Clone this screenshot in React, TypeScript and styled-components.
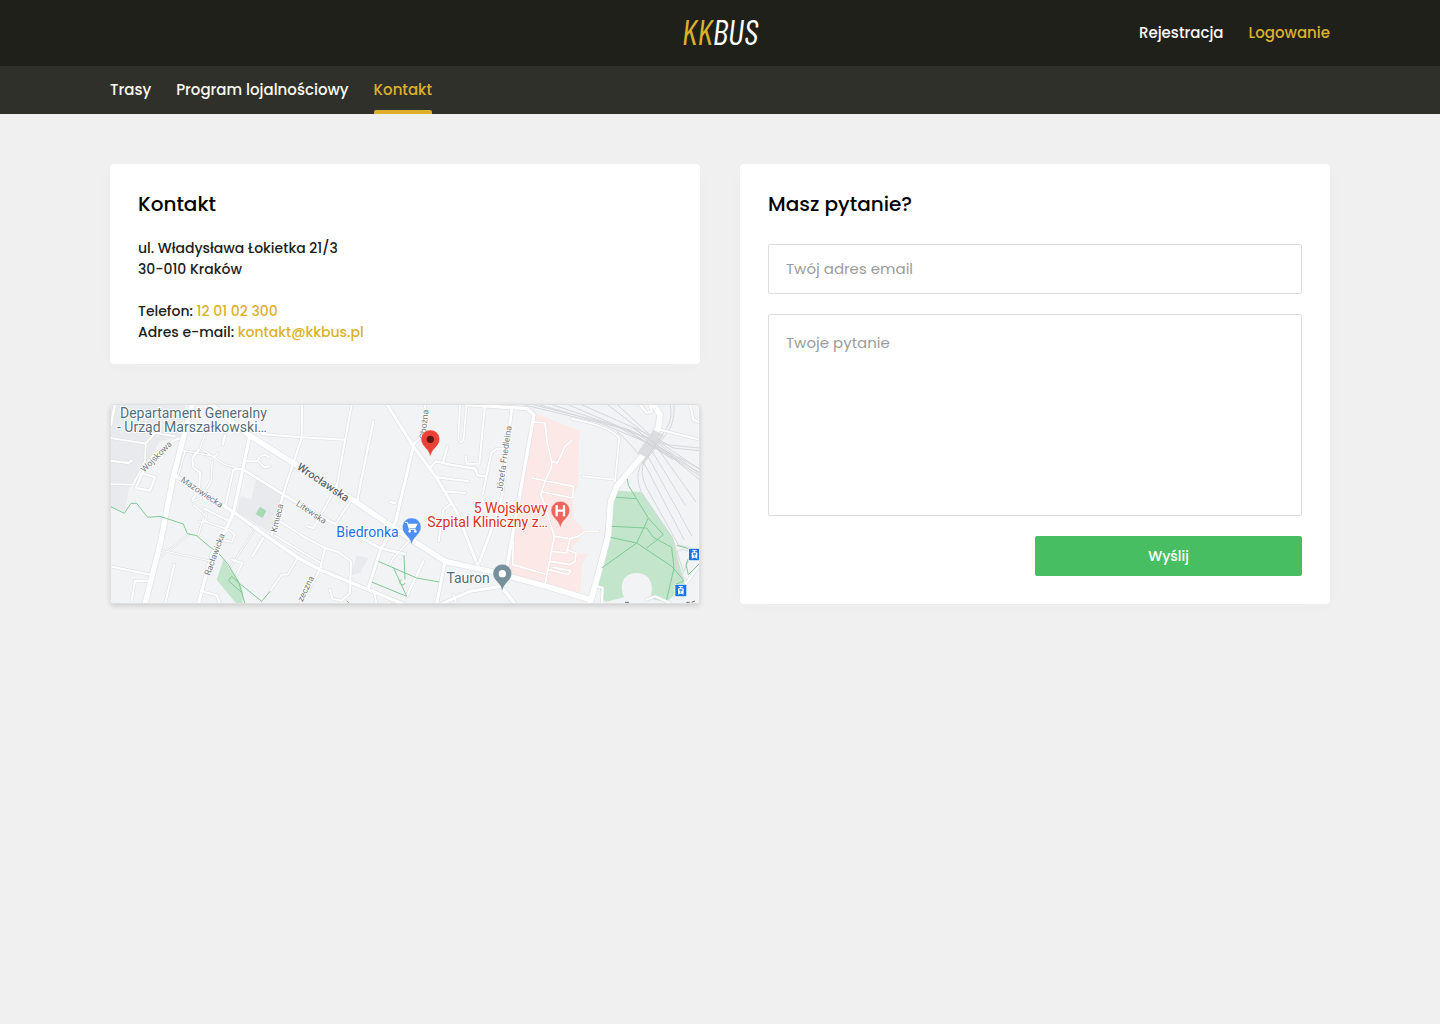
import React from "react";
import styled, { createGlobalStyle } from "styled-components";

const color = {
  ink: "#21211b",
  dark: "#20201b",
  darkSoft: "#30302b",
  gold: "#dbb12c",
  light: "#fafaf2",
  page: "#f0f0f0",
  green: "#48be63",
  line: "#dcdcdc",
};

const GlobalStyle = createGlobalStyle`
  *, *::before, *::after { box-sizing: border-box; }
  body {
    margin: 0;
    background: ${color.page};
    color: ${color.ink};
    font-family: Poppins, Inter, "Noto Sans", sans-serif;
    font-size: 14px;
    font-weight: 500;
    -webkit-font-smoothing: antialiased;
  }
`;

const Container = styled.div`
  width: 100%;
  max-width: 1220px;
  margin: 0 auto;
`;

const TopBar = styled.header`
  background: ${color.dark};
`;

const TopBarInner = styled(Container)`
  display: grid;
  grid-template-columns: 1fr auto 1fr;
  align-items: center;
  height: 66px;
`;

const Logo = styled.a`
  grid-column: 2;
  padding-bottom: 4px;
  color: #fff;
  font-family: "Barlow Condensed", "Roboto Condensed", sans-serif;
  font-size: 35px;
  font-style: italic;
  font-weight: 400;
  line-height: 40px;
  text-decoration: none;
`;

const LogoAccent = styled.span`
  color: ${color.gold};
`;

const AccountLinks = styled.nav`
  display: flex;
  justify-content: flex-end;
  gap: 25px;
`;

const BarLink = styled.a<{ $active?: boolean }>`
  color: ${(p) => (p.$active ? color.gold : color.light)};
  font-size: 15px;
  line-height: 24px;
  text-decoration: none;
`;

const MenuBar = styled.div`
  background: ${color.darkSoft};
`;

const Menu = styled(Container).attrs({ as: "nav" })`
  display: flex;
  gap: 25px;
  height: 48px;
`;

const MenuLink = styled(BarLink)`
  display: flex;
  flex-direction: column;
  justify-content: space-between;
  padding-top: 12px;

  &::after {
    content: "";
    height: 4px;
    border-radius: 2px 2px 0 0;
    background: ${(p) => (p.$active ? color.gold : "transparent")};
  }
`;

const Content = styled(Container).attrs({ as: "main" })`
  display: grid;
  grid-template-columns: 1fr 1fr;
  gap: 40px;
  padding: 50px 0;
`;

const Column = styled.div`
  display: flex;
  flex-direction: column;
  gap: 40px;
`;

const Card = styled.section`
  flex: 1;
  padding: 28px 28px 20px;
  background: #fff;
  border-radius: 4px;
  box-shadow: 0 3px 20px rgba(0, 0, 0, 0.02);
`;

const FormCard = styled(Card)`
  padding-bottom: 28px;
`;

const Title = styled.h2`
  margin: 0;
  color: #000;
  font-size: 20px;
  font-weight: 500;
  line-height: 24px;
`;

const Address = styled.address`
  margin-top: 22px;
  font-style: normal;
  line-height: 21px;
`;

const AddressBlock = styled.p`
  margin: 0 0 21px;

  &:last-child {
    margin-bottom: 0;
  }
`;

const ContactLink = styled.a`
  color: ${color.gold};
  text-decoration: none;
`;

const MapFrame = styled.figure`
  height: 200px;
  margin: 0;
  overflow: hidden;
  border: 1px solid #dfe0e2;
  border-radius: 4px;
  box-shadow: 0 2px 5px rgba(0, 0, 0, 0.15);
`;

const MapDrawing = styled.svg`
  display: block;
  width: 100%;
  height: 100%;
  font-family: Roboto, sans-serif;
`;

const Form = styled.form`
  display: flex;
  flex-direction: column;
  gap: 20px;
  margin-top: 28px;
`;

const Field = styled.input`
  display: block;
  width: 100%;
  height: 50px;
  padding: 0 17px 2px;
  border: 1px solid ${color.line};
  border-radius: 2px;
  background: #fff;
  color: ${color.ink};
  font: inherit;
  font-size: 15px;
  font-weight: 400;
  line-height: 24px;

  &::placeholder {
    color: #9b9b9b;
    opacity: 1;
  }
`;

const TextArea = styled(Field).attrs({ as: "textarea" })`
  height: 202px;
  padding: 16px 17px;
  resize: none;
`;

const SubmitButton = styled.button`
  align-self: flex-end;
  width: 50%;
  height: 40px;
  border: 0;
  border-radius: 2px;
  background: ${color.green};
  color: #fff;
  font: inherit;
  cursor: pointer;
`;

type Road = [width: number, d: string];

/* The map is drawn in two sheets; the eastern one is shifted to join the western one. */
const EAST = "translate(-15 0)";

const westRoads: Road[] = [
  [5, "M15 120L122 137L150 105L210 115 M122 137L120 190L85 260L15 258"],
  [6, "M15 188L70 195L80 188"],
  [7, "M110 228L93 270L135 278L150 238L118 228"],
  [7, "M222 122L205 128L140 178L110 228"],
  [7, "M360 112L353 140 M30 18L18 80"],
  [4, "M235 158L330 175L340 165 M220 230L240 160 M300 110L285 150L360 200L412 215"],
  [6, "M282 155L262 180L265 208L285 225L282 275L262 305"],
  [4, "M322 190L318 250L290 300L262 310 M295 360L280 410 M265 320L305 355L295 375L282 370"],
  [5, "M300 370L370 395L390 410L380 432L350 425"],
  [6, "M385 215L362 320 M298 332L370 368 M415 212L385 215"],
  [6, "M425 190L455 190L465 175L480 170L492 178 M460 190L478 208L492 205"],
  [3, "M165 478L250 410 M160 455L320 490 M445 400L375 510"],
  [6, "M15 505L135 530 M130 550L90 548L80 608 M208 500L180 618"],
  [6, "M290 580L335 592L345 618 M380 485L412 495L395 530"],
  [7, "M590 120L540 270L500 410 M475 420L442 475"],
  [6, "M470 108L590 118L720 125 M590 118L591 18"],
  [6, "M525 370L600 418L660 450L645 515L585 618 M660 450L700 462L738 490L735 585L710 608L682 602L675 575"],
  [5, "M508 412L648 496 M575 485L548 530L530 530L495 580"],
  [8, "M415 215L560 305L675 370L825 450L900 468"],
  [10, "M435 110L410 230L385 345L360 400L320 470L280 618"],
  [10, "M205 228L390 345L500 425L585 483L645 515L785 573L895 618"],
  [16, "M262 18L235 120L205 235L165 440L120 618"],
  [16, "M315 18L430 110L585 208L735 300L915 422L1020 490L1165 522L1335 568L1455 605"],
];

const eastRoads: Road[] = [
  [6, "M755 20L710 265L640 390L620 385 M750 312L705 380"],
  [7, "M820 70L772 305"],
  [7, "M975 20L970 110L940 140 M885 315L870 312"],
  [5, "M1080 20L1075 120Q1085 145 1091 120L1100 20"],
  [6, "M1155 20L1138 197L1100 197L1097 175"],
  [7, "M990 210L1008 190L1050 200L1125 212L1133 232L1155 235 M1042 145L1030 190"],
  [6, "M1010 238L1105 250 M1030 280L1095 285 M1052 318L1030 335L1016 430"],
  [6, "M1148 290L1174 165L1190 152L1215 152"],
  [5, "M925 430L880 480L870 500 M820 575L830 618 M1070 618L1060 590"],
  [7, "M970 490L920 595"],
  [8, "M1235 35L1205 300L1180 380L1135 500"],
  [9, "M940 145L887 370L840 460L805 570"],
  [9, "M860 18L940 145L1010 240L1072 345L1132 500"],
  [9, "M1035 490L1010 618 M1030 615L1110 580L1205 565"],
  [10, "M1100 20L1280 32L1302 50L1215 540 M1200 560L1245 618"],
  [5, "M1415 62L1470 75Q1540 95 1558 120L1545 250 M1448 235L1545 245"],
  [6, "M1680 95L1800 125 M1770 18L1780 65L1815 80"],
  [7, "M1620 20L1640 45L1655 40L1650 20"],
  [6, "M1490 565L1508 570L1505 618 M1640 605L1665 595L1710 615 M1800 500L1755 560"],
  [17, "M1660 18L1680 50L1675 90L1630 170L1550 265L1532 310L1525 410L1510 470L1470 618"],
];

const hospitalRoads =
  "M1302 72L1335 75L1342 135L1355 190L1372 195L1395 145L1415 128 M1355 190L1355 205L1335 250L1322 290L1330 310 M1296 240L1420 265L1418 300L1328 282 M1330 310L1352 380L1363 415L1335 560 M1363 415L1410 422L1435 415L1455 400L1495 400 M1240 430L1238 500L1335 528 M1355 460L1400 465L1410 422 M1350 490L1410 500L1425 490L1428 465L1400 455 M1345 515L1405 530L1412 518L1360 508";

const railLines = [
  "M1260 18L1500 75L1680 150L1815 220",
  "M1310 18L1560 90L1815 232",
  "M1350 18L1600 100L1815 245",
  "M1400 18L1650 125L1815 258",
  "M1440 18L1660 115L1720 150L1815 160",
  "M1290 18L1520 75L1700 140L1815 152",
  "M1520 18L1640 110L1815 240",
  "M1550 18L1660 120L1815 225",
  "M1710 18Q1720 60 1700 90L1620 205Q1605 240 1625 285L1720 430L1750 520",
  "M1722 18Q1725 70 1705 100L1635 190Q1615 220 1640 270L1735 440",
  "M1550 100Q1610 150 1640 210L1752 425",
  "M1630 150L1776 415",
  "M1650 150L1756 322",
  "M1665 140L1788 312",
];

const RoadLines = ({ roads, casing = 0 }: { roads: Road[]; casing?: number }) => (
  <>
    {roads.map(([width, d]) => (
      <path key={d} d={d} strokeWidth={width + casing} />
    ))}
  </>
);

type Pin = { x: number; y: number; fill: string };

const MapPin = ({ x, y, fill, children }: Pin & { children: React.ReactNode }) => (
  <g transform={`translate(${x} ${y})`}>
    <path
      d="M0 53C-4 33 -14 28 -22 17A28 28 0 1 1 22 17C14 28 4 33 0 53Z"
      fill={fill}
      stroke="#fff"
      strokeOpacity="0.6"
      strokeWidth="2"
    />
    {children}
  </g>
);

const TramStop = ({ x, y }: { x: number; y: number }) => (
  <g transform={`translate(${x} ${y})`}>
    <rect x="-2" y="-2" width="37" height="39" rx="3" fill="#fff" />
    <rect width="33" height="35" rx="2" fill="#1a73e8" />
    <path d="M10 6H23M16 6V12M9 30L12 25M24 30L21 25" stroke="#fff" strokeWidth="3" />
    <rect x="8" y="11" width="17" height="16" rx="3" fill="#fff" />
    <path d="M12 14H21V18H12Z" fill="#1a73e8" />
    <circle cx="16" cy="22" r="2" fill="#1a73e8" />
  </g>
);

const PlaceText = styled.text<{ $fill: string }>`
  fill: ${(p) => p.$fill};
  font-size: 42px;
  font-weight: 400;
  stroke: #fff;
  stroke-width: 6px;
  stroke-linejoin: round;
  paint-order: stroke;
`;

const StreetText = styled.text<{ $main?: boolean }>`
  fill: ${(p) => (p.$main ? "#5f6368" : "#757a80")};
  font-size: ${(p) => (p.$main ? 33 : 26)}px;
  font-weight: ${(p) => (p.$main ? 500 : 400)};
  stroke: #fff;
  stroke-width: 5px;
  stroke-linejoin: round;
  paint-order: stroke;
  text-anchor: middle;
`;

const streets = [
  { name: "Wojskowa", x: 160, y: 182, turn: -45 },
  { name: "Mazowiecka", x: 286, y: 290, turn: 34 },
  { name: "Racławicka", x: 337, y: 472, turn: -70 },
  { name: "Kmieca", x: 525, y: 362, turn: -76 },
  { name: "Litewska", x: 614, y: 350, turn: 34 },
  { name: "Wrocławska", x: 648, y: 262, turn: 34, main: true },
  { name: "Obożna", x: 966, y: 80, turn: -84 },
  { name: "Józefa Friedleina", x: 1206, y: 183, turn: -82 },
  { name: "zeczna", x: 610, y: 576, turn: -64 },
];

const CityMap = () => (
  <MapDrawing viewBox="18 21 1764 594" preserveAspectRatio="xMidYMid slice" role="img" aria-label="Mapa">
    <rect x="0" y="0" width="1800" height="636" fill="#f1f3f5" />
    <path d="M0 0H245L225 115L165 130L105 225L72 270L58 340L0 325Z" fill="#e8eaed" />
    <path d="M452 245L535 280L495 405L395 340L408 295L438 305Z M755 472L790 480L765 525L737 530Z" fill="#e8eaed" />
    <path d="M465 326L484 338L473 360L452 349Z" fill="#a8dab5" />
    <path d="M355 485L400 545L415 585L412 618H395L335 545Z" fill="#c2e5cb" />
    <g transform={EAST}>
      <path
        d="M1305 45L1438 100L1434 260L1418 300V360L1450 392L1438 425L1415 450L1430 470L1465 465L1445 500L1440 590L1215 535L1300 60Z"
        fill="#fce8e6"
      />
      <path
        d="M1548 278L1625 282L1720 420L1730 470L1755 560L1700 612L1650 602C1665 560 1650 525 1610 525C1570 525 1555 560 1572 598L1515 612L1492 555L1530 300Z"
        fill="#c2e5cb"
      />
      <g fill="none" stroke="#d5d8db" strokeWidth="3">
        {railLines.map((d) => (
          <path key={d} d={d} />
        ))}
        <path d="M1725 480Q1725 455 1750 455Q1785 460 1765 490L1740 545 M1728 470L1730 520L1765 550 M1735 440L1790 455" />
      </g>
    </g>

    <g fill="none" stroke="#dfe2e5" strokeLinecap="round" strokeLinejoin="round">
      <RoadLines roads={westRoads} casing={4} />
      <g transform={EAST}>
        <RoadLines roads={eastRoads} casing={4} />
        <path d={hospitalRoads} strokeWidth="8" stroke="#eadfe0" />
      </g>
    </g>
    <g fill="none" stroke="#fff" strokeLinecap="round" strokeLinejoin="round">
      <RoadLines roads={westRoads} />
      <g transform={EAST}>
        <RoadLines roads={eastRoads} />
        <path d={hospitalRoads} strokeWidth="5" />
      </g>
    </g>

    <g transform={EAST}>
      <path d="M1660 95L1685 108L1640 178L1612 165Z" fill="#dadce0" />
      <path d="M1600 90L1740 190M1580 95L1720 185M1690 110L1625 200" fill="none" stroke="#cdd0d4" strokeWidth="3" />
      <circle cx="1132" cy="496" r="6" fill="#fff" stroke="#dcdfe2" strokeWidth="2" />
    </g>

    <g fill="none" stroke="#81c995" strokeWidth="3" strokeLinejoin="round">
      <path d="M15 325L58 346L78 316H95L128 358L165 355L235 378L247 407L275 413L312 445L340 465L370 500L402 555L470 610L495 580 M402 555L420 618 M402 555L380 535L370 548L408 582" />
      <g transform={EAST}>
        <path d="M835 490L950 540L1018 552 M815 552L920 595L880 508 M912 472L915 545 M905 545A8 8 0 1 0 915 555" />
        <path d="M1582 243L1585 262L1645 360L1690 410L1640 450 M1548 298L1608 302 M1645 360L1610 435L1505 510 M1535 385L1640 390L1660 418L1715 448L1722 510L1700 605 M1532 418L1610 435L1715 505L1752 548L1725 560 M1730 442L1765 452 M1800 495L1765 530L1758 500L1770 470" />
        <path d="M740 608L750 618" />
      </g>
    </g>

    {streets.map((s) => (
      <StreetText key={s.name} $main={s.main} transform={`translate(${s.x} ${s.y}) rotate(${s.turn})`}>
        {s.name}
      </StreetText>
    ))}

    <PlaceText $fill="#546e7a" x="45" y="60">Departament Generalny</PlaceText>
    <PlaceText $fill="#546e7a" x="36" y="102">- Urząd Marszałkowski…</PlaceText>
    <PlaceText $fill="#1a73e8" x="881" y="417" textAnchor="end">Biedronka</PlaceText>
    <PlaceText $fill="#d93025" x="1329" y="345" textAnchor="end">5 Wojskowy</PlaceText>
    <PlaceText $fill="#d93025" x="1329" y="387" textAnchor="end">Szpital Kliniczny z…</PlaceText>
    <PlaceText $fill="#546e7a" x="1154" y="555" textAnchor="end">Tauron</PlaceText>

    <MapPin x={976} y={124} fill="#ea4335">
      <circle r="11" fill="#5f1510" />
    </MapPin>
    <MapPin x={920} y={388} fill="#4f8ff7">
      <path d="M-20 -15H-13L-7 6H12" fill="none" stroke="#fff" strokeWidth="3" />
      <path d="M-12 -11H18L11 3H-7Z" fill="#fff" />
      <circle cx="-6" cy="12" r="4" fill="#fff" />
      <circle cx="11" cy="12" r="4" fill="#fff" />
    </MapPin>
    <MapPin x={1366} y={338} fill="#ee675c">
      <path d="M-11 -16V17M11 -16V17M-11 0H11" stroke="#fff" strokeWidth="7" />
    </MapPin>
    <MapPin x={1192} y={527} fill="#78909c">
      <circle r="11" fill="#fff" />
    </MapPin>
    <TramStop x={1752} y={452} />
    <TramStop x={1711} y={560} />
    <path d="M1560 613H1572M1744 613H1754M1760 613L1770 609" stroke="#5f6b76" strokeWidth="3" />
  </MapDrawing>
);

export default function App() {
  return (
    <>
      <GlobalStyle />
      <TopBar>
        <TopBarInner>
          <Logo href="#home">
            <LogoAccent>KK</LogoAccent>BUS
          </Logo>
          <AccountLinks aria-label="Konto">
            <BarLink href="#rejestracja">Rejestracja</BarLink>
            <BarLink href="#logowanie" $active>Logowanie</BarLink>
          </AccountLinks>
        </TopBarInner>
      </TopBar>
      <MenuBar>
        <Menu aria-label="Menu">
          <MenuLink href="#trasy">Trasy</MenuLink>
          <MenuLink href="#program">Program lojalnościowy</MenuLink>
          <MenuLink href="#kontakt" $active aria-current="page">Kontakt</MenuLink>
        </Menu>
      </MenuBar>
      <Content>
        <Column>
          <Card>
            <Title>Kontakt</Title>
            <Address>
              <AddressBlock>
                ul. Władysława Łokietka 21/3
                <br />
                30-010 Kraków
              </AddressBlock>
              <AddressBlock>
                Telefon: <ContactLink href="tel:120102300">12 01 02 300</ContactLink>
                <br />
                Adres e-mail: <ContactLink href="mailto:kontakt@kkbus.pl">kontakt@kkbus.pl</ContactLink>
              </AddressBlock>
            </Address>
          </Card>
          <MapFrame>
            <CityMap />
          </MapFrame>
        </Column>
        <FormCard>
          <Title>Masz pytanie?</Title>
          <Form onSubmit={(e: React.FormEvent) => e.preventDefault()}>
            <Field type="email" aria-label="Twój adres email" placeholder="Twój adres email" />
            <TextArea aria-label="Twoje pytanie" placeholder="Twoje pytanie" />
            <SubmitButton type="submit">Wyślij</SubmitButton>
          </Form>
        </FormCard>
      </Content>
    </>
  );
}
